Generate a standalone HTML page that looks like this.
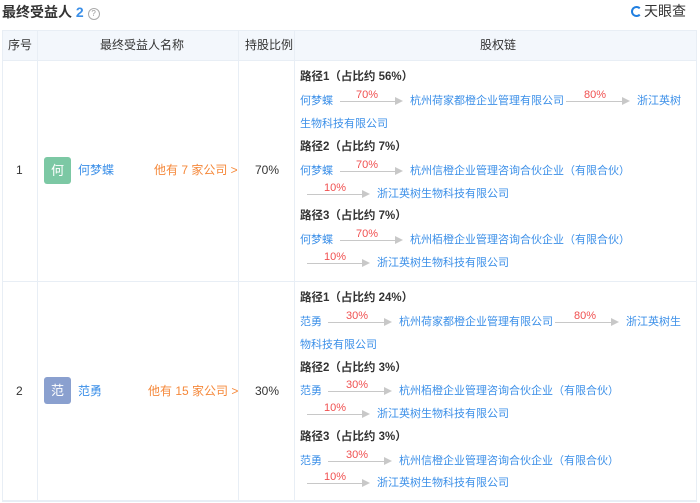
<!DOCTYPE html><html><head><meta charset="utf-8"><style>
body{margin:0;width:700px;height:503px;background:#fff;font-family:"Liberation Sans","Noto Sans CJK SC",sans-serif;font-size:12px;color:#333;position:relative;overflow:hidden}
.a{position:absolute;white-space:nowrap;line-height:16px}
.b{color:#3b8fe8}
.c{font-size:11px}
.h{font-weight:bold;color:#333;font-size:11.5px}
.ar{position:absolute;height:1px;background:#c8c8c8}
.ar:after{content:"";position:absolute;right:-8px;top:-4px;border-left:8px solid #c8c8c8;border-top:4.5px solid transparent;border-bottom:4.5px solid transparent}
.p{position:absolute;color:#f05050;font-size:11px;line-height:12px}
.cl{position:absolute;background:#e8eef5}
</style></head><body>
<div class="a" style="left:2px;top:3px;font-size:14px;font-weight:bold;line-height:18px">最终受益人 <span style="color:#3b8fe8">2</span> <span style="display:inline-block;width:10px;height:10px;border:1px solid #aaa;border-radius:50%;font-size:8px;line-height:10px;text-align:center;color:#999;font-weight:normal;vertical-align:1px">?</span></div>
<div class="a" style="left:631px;top:2px;font-size:14px;color:#333;line-height:18px"><span style="display:inline-block;width:11px;height:11px;border-radius:50%;border:2px solid #1f7ee0;border-right-color:transparent;box-sizing:border-box;vertical-align:-1px;margin-right:2px"></span>天眼查</div>
<div style="position:absolute;left:2px;top:30px;width:695px;height:30px;background:#f3f7fc"></div>
<div class="cl" style="left:2px;top:30px;width:695px;height:1px"></div>
<div class="cl" style="left:2px;top:60px;width:695px;height:1px"></div>
<div class="cl" style="left:2px;top:281px;width:695px;height:1px"></div>
<div class="cl" style="left:2px;top:500px;width:695px;height:2px"></div>
<div class="cl" style="left:2px;top:30px;width:1px;height:471px"></div>
<div class="cl" style="left:37px;top:30px;width:1px;height:471px"></div>
<div class="cl" style="left:238px;top:30px;width:1px;height:471px"></div>
<div class="cl" style="left:294px;top:30px;width:1px;height:471px"></div>
<div class="cl" style="left:696px;top:30px;width:1px;height:471px"></div>
<div class="a" style="left:8px;top:37px">序号</div>
<div class="a" style="left:100px;top:37px">最终受益人名称</div>
<div class="a" style="left:245px;top:37px">持股比例</div>
<div class="a" style="left:480px;top:37px">股权链</div>

<div class="a" style="left:16px;top:162px">1</div>
<div class="a" style="left:44px;top:157px;width:27px;height:27px;background:#7cc8a4;color:#fff;border-radius:3px;text-align:center;line-height:27px;font-size:13px">何</div>
<div class="a b" style="left:78px;top:162px">何梦蝶</div>
<div class="a" style="left:154px;top:162px;color:#f5883a">他有 7 家公司 &gt;</div>
<div class="a" style="left:255px;top:162px">70%</div>

<div class="a" style="left:16px;top:383px">2</div>
<div class="a" style="left:44px;top:377px;width:27px;height:27px;background:#8aa0cf;color:#fff;border-radius:3px;text-align:center;line-height:27px;font-size:13px">范</div>
<div class="a b" style="left:78px;top:383px">范勇</div>
<div class="a" style="left:148px;top:383px;color:#f5883a">他有 15 家公司 &gt;</div>
<div class="a" style="left:255px;top:383px">30%</div>

<div class="a h" style="left:300px;top:69px">路径1（占比约 56%）</div>
<div class="a b c" style="left:300px;top:93px">何梦蝶</div>
<div class="ar" style="left:340px;top:101px;width:55px"></div><div class="p" style="left:356px;top:89px">70%</div>
<div class="a b c" style="left:410px;top:93px">杭州荷家都橙企业管理有限公司</div>
<div class="ar" style="left:566px;top:101px;width:56px"></div><div class="p" style="left:584px;top:89px">80%</div>
<div class="a b c" style="left:637px;top:93px">浙江英树</div>
<div class="a b c" style="left:300px;top:116px">生物科技有限公司</div>

<div class="a h" style="left:300px;top:139px">路径2（占比约 7%）</div>
<div class="a b c" style="left:300px;top:163px">何梦蝶</div>
<div class="ar" style="left:340px;top:171px;width:55px"></div><div class="p" style="left:356px;top:159px">70%</div>
<div class="a b c" style="left:410px;top:163px">杭州信橙企业管理咨询合伙企业（有限合伙）</div>
<div class="ar" style="left:307px;top:194px;width:55px"></div><div class="p" style="left:324px;top:182px">10%</div>
<div class="a b c" style="left:377px;top:186px">浙江英树生物科技有限公司</div>

<div class="a h" style="left:300px;top:208px">路径3（占比约 7%）</div>
<div class="a b c" style="left:300px;top:232px">何梦蝶</div>
<div class="ar" style="left:340px;top:240px;width:55px"></div><div class="p" style="left:356px;top:228px">70%</div>
<div class="a b c" style="left:410px;top:232px">杭州栢橙企业管理咨询合伙企业（有限合伙）</div>
<div class="ar" style="left:307px;top:263px;width:55px"></div><div class="p" style="left:324px;top:251px">10%</div>
<div class="a b c" style="left:377px;top:255px">浙江英树生物科技有限公司</div>

<div class="a h" style="left:300px;top:290px">路径1（占比约 24%）</div>
<div class="a b c" style="left:300px;top:314px">范勇</div>
<div class="ar" style="left:328px;top:322px;width:56px"></div><div class="p" style="left:346px;top:310px">30%</div>
<div class="a b c" style="left:399px;top:314px">杭州荷家都橙企业管理有限公司</div>
<div class="ar" style="left:555px;top:322px;width:56px"></div><div class="p" style="left:574px;top:310px">80%</div>
<div class="a b c" style="left:626px;top:314px">浙江英树生</div>
<div class="a b c" style="left:300px;top:337px">物科技有限公司</div>

<div class="a h" style="left:300px;top:360px">路径2（占比约 3%）</div>
<div class="a b c" style="left:300px;top:383px">范勇</div>
<div class="ar" style="left:328px;top:391px;width:56px"></div><div class="p" style="left:346px;top:379px">30%</div>
<div class="a b c" style="left:399px;top:383px">杭州栢橙企业管理咨询合伙企业（有限合伙）</div>
<div class="ar" style="left:307px;top:414px;width:55px"></div><div class="p" style="left:324px;top:402px">10%</div>
<div class="a b c" style="left:377px;top:406px">浙江英树生物科技有限公司</div>

<div class="a h" style="left:300px;top:429px">路径3（占比约 3%）</div>
<div class="a b c" style="left:300px;top:453px">范勇</div>
<div class="ar" style="left:328px;top:461px;width:56px"></div><div class="p" style="left:346px;top:449px">30%</div>
<div class="a b c" style="left:399px;top:453px">杭州信橙企业管理咨询合伙企业（有限合伙）</div>
<div class="ar" style="left:307px;top:483px;width:55px"></div><div class="p" style="left:324px;top:471px">10%</div>
<div class="a b c" style="left:377px;top:475px">浙江英树生物科技有限公司</div>
</body></html>
